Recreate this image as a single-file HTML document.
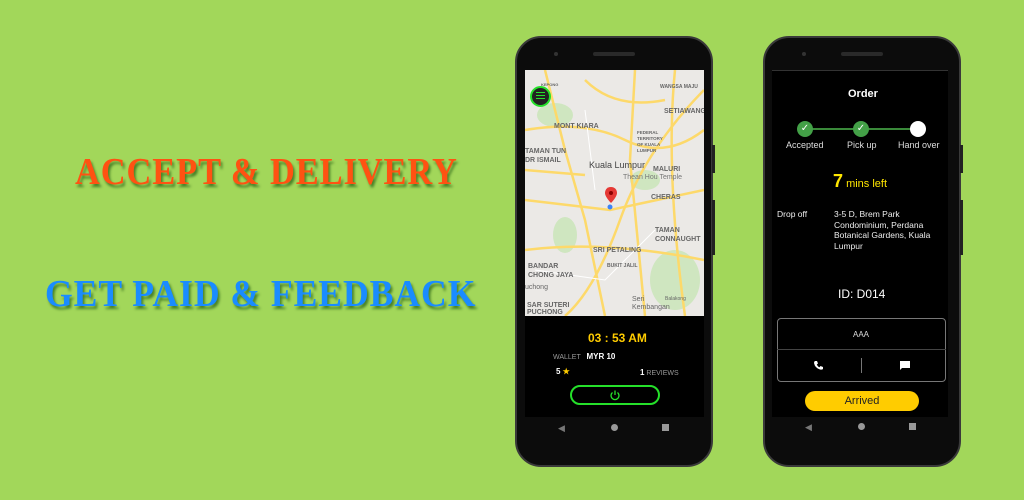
<!DOCTYPE html>
<html><head><meta charset="utf-8"><style>
*{margin:0;padding:0;box-sizing:border-box}
body{width:1024px;height:500px;background:#a2d75a;position:relative;overflow:hidden;font-family:"Liberation Sans",sans-serif}
.t{position:absolute;font-family:"Liberation Serif",serif;font-weight:900;letter-spacing:1px;transform-origin:left top;text-shadow:2px 3px 3px rgba(0,60,0,.55)}
.phone{position:absolute;background:#0c0c0c;border:2px solid #3a3a3a;border-radius:26px}
.scr{position:absolute;background:#000}
.abs{position:absolute}
.lbl{position:absolute;font-size:7px;color:#666;font-weight:bold}
</style></head><body>
<div class="t" style="left:75px;top:150px;font-size:38px;color:#ff5212;transform:scaleX(0.906)">ACCEPT &amp; DELIVERY</div>
<div class="t" style="left:45px;top:272px;font-size:38px;color:#1a8cff;transform:scaleX(0.938)">GET PAID &amp; FEEDBACK</div>

<!-- phone 1 -->
<div class="phone" style="left:515px;top:36px;width:198px;height:431px"></div>
<div class="abs" style="left:554px;top:52px;width:4px;height:4px;border-radius:50%;background:#333"></div>
<div class="abs" style="left:593px;top:52px;width:42px;height:4px;border-radius:2px;background:#2a2a2a"></div>
<div class="abs" style="left:712px;top:145px;width:3px;height:28px;background:#222"></div>
<div class="abs" style="left:712px;top:200px;width:3px;height:55px;background:#222"></div>
<div class="scr" style="left:525px;top:70px;width:179px;height:347px"></div>
<div class="abs" style="left:525px;top:70px;width:179px;height:246px;background:#ebe9e6;overflow:hidden">
<svg width="179" height="246" style="position:absolute;left:0;top:0">
<g fill="#cfe6c0"><ellipse cx="30" cy="45" rx="18" ry="12"/><ellipse cx="150" cy="210" rx="25" ry="30"/><ellipse cx="40" cy="165" rx="12" ry="18"/><ellipse cx="120" cy="110" rx="15" ry="10"/></g>
<g stroke="#fdd96a" stroke-width="2.5" fill="none">
<path d="M0 60 Q60 50 100 70 T179 60"/><path d="M20 0 L40 80 L60 150 L80 246"/><path d="M179 20 Q120 80 95 150 T40 246"/><path d="M0 130 L85 140 L179 120"/><path d="M0 180 Q80 170 179 190"/><path d="M110 0 L105 90 L120 246"/><path d="M150 0 Q140 100 160 246"/><path d="M0 100 L60 105"/><path d="M60 10 Q90 40 140 30"/>
</g>
<g stroke="#fff" stroke-width="1" fill="none"><path d="M10 200 L80 210 L130 160"/><path d="M60 40 L70 120"/></g>
</svg>
<div class="lbl" style="left:16px;top:12px;font-size:4px">KEPONG</div>
<div class="lbl" style="left:135px;top:14px;font-size:5px">WANGSA MAJU</div>
<div class="lbl" style="left:139px;top:38px">SETIAWANGS</div>
<div class="lbl" style="left:29px;top:53px">MONT KIARA</div>
<div class="lbl" style="left:112px;top:60px;font-size:4.5px;line-height:6px">FEDERAL<br>TERRITORY<br>OF KUALA<br>LUMPUR</div>
<div class="lbl" style="left:0;top:77px;line-height:9px">TAMAN TUN<br>DR ISMAIL</div>
<div class="lbl" style="left:64px;top:90px;font-size:9px;font-weight:normal;color:#444">Kuala Lumpur</div>
<div class="lbl" style="left:128px;top:96px">MALURI</div>
<div class="lbl" style="left:98px;top:104px;font-weight:normal;color:#777">Thean Hou Temple</div>
<div class="lbl" style="left:126px;top:124px">CHERAS</div>
<div class="lbl" style="left:130px;top:156px;line-height:9px">TAMAN<br>CONNAUGHT</div>
<div class="lbl" style="left:68px;top:177px">SRI PETALING</div>
<div class="lbl" style="left:82px;top:193px;font-size:5px">BUKIT JALIL</div>
<div class="lbl" style="left:3px;top:192px;line-height:9px">BANDAR<br>CHONG JAYA</div>
<div class="lbl" style="left:0;top:214px;font-weight:normal">uchong</div>
<div class="lbl" style="left:107px;top:226px;font-weight:normal;line-height:8px">Seri<br>Kembangan</div>
<div class="lbl" style="left:140px;top:226px;font-weight:normal;font-size:5px">Balakong</div>
<div class="lbl" style="left:2px;top:232px;line-height:7px">SAR SUTERI<br>PUCHONG</div>
<svg class="abs" style="left:80px;top:117px" width="12" height="24"><path d="M6 0 C1 0 0 4 0 6 C0 10 6 16 6 16 C6 16 12 10 12 6 C12 3 10 0 6 0Z" fill="#e53935"/><circle cx="6" cy="6" r="2" fill="#8b0000"/><circle cx="5" cy="20" r="2.5" fill="#3b82f6"/></svg>
<div class="abs" style="left:5px;top:16px;width:21px;height:21px;border-radius:50%;background:#222;border:2px solid #25e02a"></div>
<div class="abs" style="left:11px;top:22px;width:9px;height:7px;border-top:1.5px solid #25e02a;border-bottom:1.5px solid #25e02a"><div style="margin-top:1.5px;height:1.5px;background:#25e02a"></div></div>
</div>
<div class="abs" style="left:588px;top:331px;color:#ffcc00;font-weight:bold;font-size:12px">03 : 53 AM</div>
<div class="abs" style="left:553px;top:352px;color:#999;font-size:7px">WALLET &nbsp; <b style="color:#fff;font-size:8px">MYR 10</b></div>
<div class="abs" style="left:556px;top:367px;color:#fff;font-size:8px;font-weight:bold">5 <span style="color:#ffcc00">★</span></div>
<div class="abs" style="left:640px;top:368px;color:#999;font-size:7px"><b style="color:#fff;font-size:8px">1</b> REVIEWS</div>
<div class="abs" style="left:570px;top:385px;width:90px;height:20px;border:2px solid #25e02a;border-radius:10px"></div>
<svg class="abs" style="left:609px;top:389px" width="12" height="12"><path d="M3.5 3.5 A4 4 0 1 0 8.5 3.5" stroke="#25e02a" stroke-width="1.3" fill="none"/><line x1="6" y1="1.5" x2="6" y2="6" stroke="#25e02a" stroke-width="1.3"/></svg>
<div class="abs" style="left:558px;top:423px;color:#777;font-size:9px">◀</div>
<div class="abs" style="left:611px;top:424px;width:7px;height:7px;border-radius:50%;background:#999"></div>
<div class="abs" style="left:662px;top:424px;width:7px;height:7px;background:#999"></div>

<!-- phone 2 -->
<div class="phone" style="left:763px;top:36px;width:198px;height:431px"></div>
<div class="abs" style="left:802px;top:52px;width:4px;height:4px;border-radius:50%;background:#333"></div>
<div class="abs" style="left:841px;top:52px;width:42px;height:4px;border-radius:2px;background:#2a2a2a"></div>
<div class="abs" style="left:960px;top:145px;width:3px;height:28px;background:#222"></div>
<div class="abs" style="left:960px;top:200px;width:3px;height:55px;background:#222"></div>
<div class="scr" style="left:772px;top:70px;width:176px;height:347px;border-top:1px solid #333"></div>
<div class="abs" style="left:848px;top:88px;color:#fff;font-weight:bold;font-size:11px">Order</div>
<div class="abs" style="left:806px;top:128px;width:110px;height:1.5px;background:#3a8a3a"></div>
<div class="abs" style="left:797px;top:121px;width:16px;height:16px;border-radius:50%;background:#43a047;color:#fff;font-size:10px;text-align:center;line-height:16px">✓</div>
<div class="abs" style="left:853px;top:121px;width:16px;height:16px;border-radius:50%;background:#43a047;color:#fff;font-size:10px;text-align:center;line-height:16px">✓</div>
<div class="abs" style="left:910px;top:121px;width:16px;height:16px;border-radius:50%;background:#fff"></div>
<div class="abs" style="left:786px;top:140px;color:#ddd;font-size:9px">Accepted</div>
<div class="abs" style="left:847px;top:140px;color:#ddd;font-size:9px">Pick up</div>
<div class="abs" style="left:898px;top:140px;color:#ddd;font-size:9px">Hand over</div>
<div class="abs" style="left:833px;top:171px;color:#ffe600;font-size:11px"><b style="font-size:18px">7</b> mins left</div>
<div class="abs" style="left:777px;top:209px;color:#eee;font-size:8.5px">Drop off</div>
<div class="abs" style="left:834px;top:209px;color:#eee;font-size:8.5px;line-height:10.5px;width:110px">3-5 D, Brem Park Condominium, Perdana Botanical Gardens, Kuala Lumpur</div>
<div class="abs" style="left:838px;top:287px;color:#fff;font-size:12px">ID: D014</div>
<div class="abs" style="left:777px;top:318px;width:169px;height:64px;border:1px solid #777;border-radius:4px"></div>
<div class="abs" style="left:777px;top:349px;width:169px;height:1px;background:#444"></div>
<div class="abs" style="left:853px;top:330px;color:#ddd;font-size:8px">AAA</div>
<div class="abs" style="left:861px;top:358px;width:1px;height:15px;background:#777"></div>
<svg class="abs" style="left:813px;top:360px" width="11" height="11"><path d="M2 1 L4 1 L5 3.5 L3.8 4.5 Q5 7 6.5 7.2 L7.5 6 L10 7 L10 9 Q9 10 7 9.5 Q2 8 1 3 Q1 1.5 2 1Z" fill="#fff"/></svg>
<svg class="abs" style="left:899px;top:360px" width="12" height="12"><path d="M1 1 H11 V8 H3 L1 10Z" fill="#fff"/></svg>
<div class="abs" style="left:805px;top:391px;width:114px;height:20px;border-radius:10px;background:#ffcc00;color:#222;font-size:11px;text-align:center;line-height:20px">Arrived</div>
<div class="abs" style="left:805px;top:422px;color:#777;font-size:9px">◀</div>
<div class="abs" style="left:858px;top:423px;width:7px;height:7px;border-radius:50%;background:#999"></div>
<div class="abs" style="left:909px;top:423px;width:7px;height:7px;background:#999"></div>
</body></html>
